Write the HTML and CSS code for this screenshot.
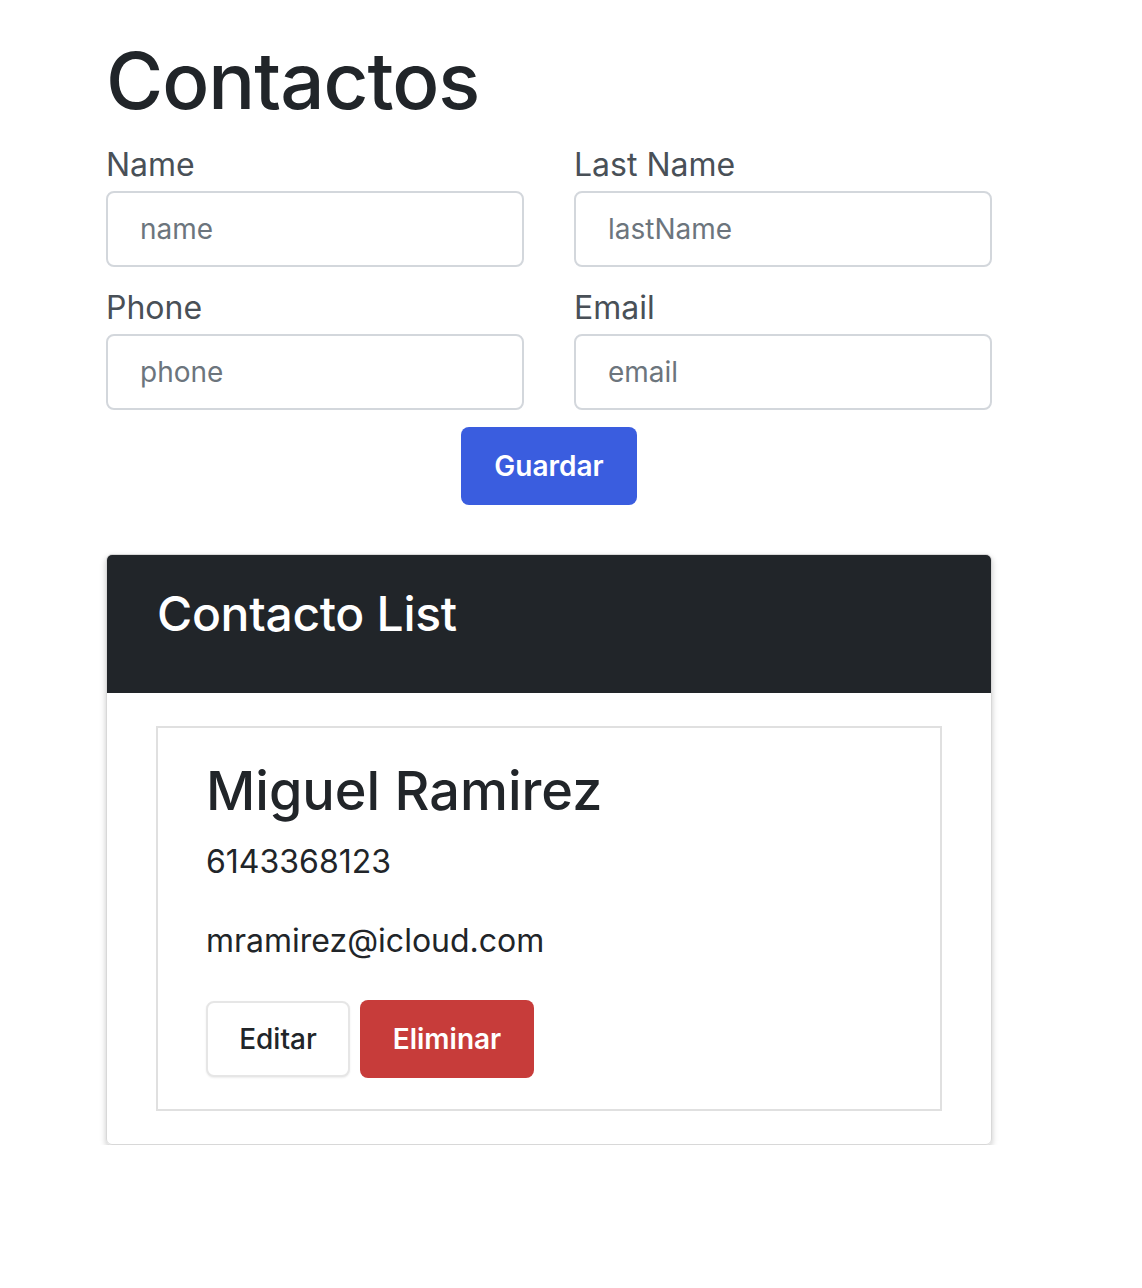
FILE: index.html
```html
<!DOCTYPE html>
<html lang="es">
<head>
<meta charset="utf-8">
<title>Contactos</title>
<link rel="stylesheet" href="styles.css">
</head>
<body>
<main class="container">
  <h1 class="title">Contactos</h1>
  <form class="form">
    <div class="grid">
      <div class="field">
        <label class="label">Name</label>
        <input class="input" placeholder="name">
      </div>
      <div class="field">
        <label class="label">Last Name</label>
        <input class="input" placeholder="lastName">
      </div>
      <div class="field">
        <label class="label">Phone</label>
        <input class="input" placeholder="phone">
      </div>
      <div class="field">
        <label class="label">Email</label>
        <input class="input" placeholder="email">
      </div>
    </div>
    <div class="actions">
      <button type="button" class="btn btn-primary">Guardar</button>
    </div>
  </form>

  <section class="card">
    <div class="card-header">
      <h2 class="card-title">Contacto List</h2>
    </div>
    <div class="card-body">
      <div class="contact">
        <h3 class="contact-name">Miguel Ramirez</h3>
        <p class="contact-line">6143368123</p>
        <p class="contact-line">mramirez@icloud.com</p>
        <div class="contact-actions">
          <button type="button" class="btn btn-light">Editar</button>
          <button type="button" class="btn btn-danger">Eliminar</button>
        </div>
      </div>
    </div>
  </section>
</main>
</body>
</html>
```

FILE: styles.css
```css
* { box-sizing: border-box; }

body {
  margin: 0;
  background: #fff;
  color: #212529;
  font-family: Inter, "Noto Sans", sans-serif;
}

.container {
  width: 886px;
  margin-left: 106px;
  padding-top: 33px;
}

.title {
  margin: 0 0 15px;
  font-size: 78px;
  font-weight: 500;
  line-height: 96px;
  letter-spacing: -1px;
  color: #212529;
}

.grid {
  display: grid;
  grid-template-columns: 418px 418px;
  column-gap: 50px;
  row-gap: 20px;
}

.field {
  display: flex;
  flex-direction: column;
}

.label {
  font-size: 32px;
  line-height: 42px;
  color: #495057;
  margin-bottom: 5px;
}

.input {
  height: 76px;
  border: 2px solid #d3d7dc;
  border-radius: 8px;
  padding: 0 32px;
  font-family: inherit;
  font-size: 28px;
  color: #212529;
  outline: none;
}

.input::placeholder {
  color: #6c757d;
}

.actions {
  display: flex;
  justify-content: center;
  margin-top: 17px;
}

.btn {
  font-family: inherit;
  font-size: 28px;
  font-weight: 600;
  border-radius: 8px;
  cursor: pointer;
}

.btn-primary {
  width: 176px;
  height: 78px;
  border: none;
  background: #3a5ddf;
  color: #fff;
}

.card {
  margin-top: 49px;
  border: 1px solid #d8d8d8;
  border-radius: 6px;
  overflow: hidden;
  box-shadow: 0 3px 6px rgba(0, 0, 0, 0.22);
}

.card-header {
  height: 138px;
  background: #212529;
  padding: 30px 50px 0;
}

.card-title {
  margin: 0;
  font-size: 48px;
  font-weight: 500;
  line-height: 58px;
  letter-spacing: -0.3px;
  color: #fff;
}

.card-body {
  padding: 33px 49px 33px;
}

.contact {
  border: 2px solid #e0e0e0;
  padding: 30px 48px 31px;
}

.contact-name {
  margin: 0 0 14px;
  font-size: 54px;
  font-weight: 500;
  line-height: 66px;
  color: #212529;
}

.contact-line {
  margin: 0 0 31px;
  font-size: 32px;
  line-height: 48px;
  color: #212529;
}

.contact-actions {
  display: flex;
  gap: 10px;
  align-items: center;
  padding-top: 4px;
}

.btn-light {
  width: 144px;
  height: 76px;
  background: #fff;
  border: 2px solid #e6e6e6;
  color: #212529;
  font-weight: 500;
  box-shadow: 0 1px 2px rgba(0, 0, 0, 0.08);
}

.btn-danger {
  width: 174px;
  height: 78px;
  border: none;
  background: #c73c3a;
  color: #fff;
}
```
